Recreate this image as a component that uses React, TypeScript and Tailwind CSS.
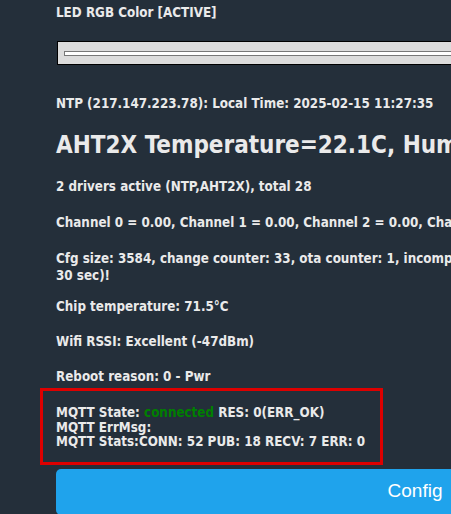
export default function App() {
  return (
    <div className="w-[451px] h-[514px] overflow-hidden bg-[#242f3a] text-[#eaeaea] font-bold font-['DejaVu_Sans_Condensed','DejaVu_Sans',sans-serif] text-[13.3px] leading-4">
      <div className="w-[718px] ml-[56px] pt-[5px]">
        <div className="whitespace-nowrap">LED RGB Color [ACTIVE]</div>
        <div className="mt-[20px] ml-[1px] h-[24px] border border-black bg-[#dcdcdc] pt-[9px] px-[6px]">
          <div className="h-[5px] border border-[#777777] bg-white" />
        </div>
        <div className="mt-[31px] whitespace-nowrap">NTP (217.147.223.78): Local Time: 2025-02-15 11:27:35</div>
        <div className="mt-[20px] whitespace-nowrap text-[24px] leading-[27px]">AHT2X Temperature=22.1C, Humidity=41.2%</div>
        <div className="mt-[20px] whitespace-nowrap">2 drivers active (NTP,AHT2X), total 28</div>
        <div className="mt-[20px] whitespace-nowrap">Channel 0 = 0.00, Channel 1 = 0.00, Channel 2 = 0.00, Channel 3 = 0.00, Channel 4 = 0.00</div>
        <div className="mt-[19px] leading-[17px]">
          <div className="whitespace-nowrap">Cfg size: 3584, change counter: 33, ota counter: 1, incomplete boots: 0 (will go to 0 in</div>
          <div className="whitespace-nowrap">30 sec)!</div>
        </div>
        <div className="mt-[15px] whitespace-nowrap">Chip temperature: 71.5°C</div>
        <div className="mt-[19px] whitespace-nowrap">Wifi RSSI: Excellent (-47dBm)</div>
        <div className="mt-[19px] whitespace-nowrap">Reboot reason: 0 - Pwr</div>
        <div className="mt-[3px] -ml-[16px] w-[343px] h-[77px] border-[3px] border-[#dd0000] pt-[15px] pl-[13px] leading-[14.5px]">
          <div className="whitespace-nowrap">
            MQTT State: <span className="text-[#008000]">connected</span> RES: 0(ERR_OK)
          </div>
          <div className="whitespace-nowrap">MQTT ErrMsg:</div>
          <div className="whitespace-nowrap">MQTT Stats:CONN: 52 PUB: 18 RECV: 7 ERR: 0</div>
        </div>
        <div className="mt-[4px] h-[46px] rounded-[5px] bg-[#1fa3ec] flex items-center justify-center text-white font-normal font-['Liberation_Sans',Arial,sans-serif] text-[19px] pb-[2px]">
          Config
        </div>
      </div>
    </div>
  );
}
